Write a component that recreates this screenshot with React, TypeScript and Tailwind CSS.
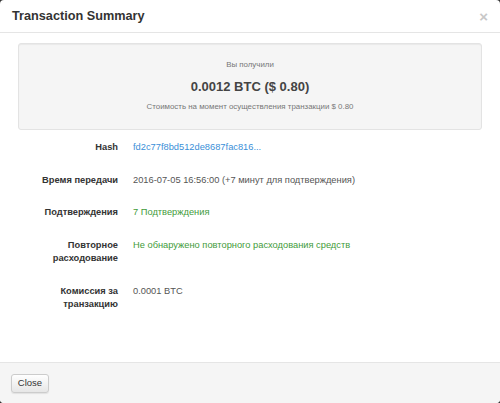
import React from "react";

const rows: { label: React.ReactNode; value: React.ReactNode; cls: string }[] = [
  { label: "Hash", value: "fd2c77f8bd512de8687fac816...", cls: "text-[#3a8fd8]" },
  { label: "Время передачи", value: "2016-07-05 16:56:00 (+7 минут для подтверждения)", cls: "text-[#555]" },
  { label: "Подтверждения", value: "7 Подтверждения", cls: "text-[#3f9b3a]" },
  { label: <>Повторное<br />расходование</>, value: "Не обнаружено повторного расходования средств", cls: "text-[#3f9b3a]" },
  { label: <>Комиссия за<br />транзакцию</>, value: "0.0001 BTC", cls: "text-[#555]" },
];

export default function App() {
  return (
    <div className="w-[500px] h-[403px] bg-[#333] font-['Liberation_Sans',Arial,sans-serif]">
      <div className="w-full h-full bg-white rounded-[4px] overflow-hidden flex flex-col">
        <div className="h-[33px] shrink-0 border-b border-[#e5e5e5] pl-[12px] pr-[12px] flex items-center justify-between">
          <span className="text-[12.7px] font-bold text-[#333] leading-none">Transaction Summary</span>
          <span className="text-[15px] font-bold text-[#c8c8c8] leading-none">×</span>
        </div>
        <div className="flex-1 px-[18px] pt-[10px]">
          <div className="h-[87px] bg-[#f5f5f5] border border-[#e3e3e3] rounded-[3px] shadow-[inset_0_1px_1px_rgba(0,0,0,0.05)] flex flex-col items-center pt-[16px]">
            <div className="text-[7.9px] leading-[10px] text-[#777]">Вы получили</div>
            <div className="mt-[9px] text-[13px] leading-[15px] font-bold text-[#444]">0.0012 BTC ($ 0.80)</div>
            <div className="mt-[8px] text-[7.9px] leading-[10px] text-[#777]">Стоимость на момент осуществления транзакции $ 0.80</div>
          </div>
          <div className="mt-[11px] flex flex-col gap-[19px]">
            {rows.map((r, i) => (
              <div key={i} className="flex text-[9.3px] leading-[13.5px]">
                <div className="w-[100px] shrink-0 text-right font-bold text-[#333]">{r.label}</div>
                <div className={"ml-[15px] " + r.cls}>{r.value}</div>
              </div>
            ))}
          </div>
        </div>
        <div className="h-[41px] shrink-0 border-t border-[#e5e5e5] bg-[#f5f5f5] pl-[11px] flex items-center">
          <button className="w-[38px] h-[19px] rounded-[3px] border border-[#ccc] bg-gradient-to-b from-white to-[#e6e6e6] shadow-[0_1px_1px_rgba(0,0,0,0.08)] text-[9.5px] text-[#333] leading-none">
            Close
          </button>
        </div>
      </div>
    </div>
  );
}
